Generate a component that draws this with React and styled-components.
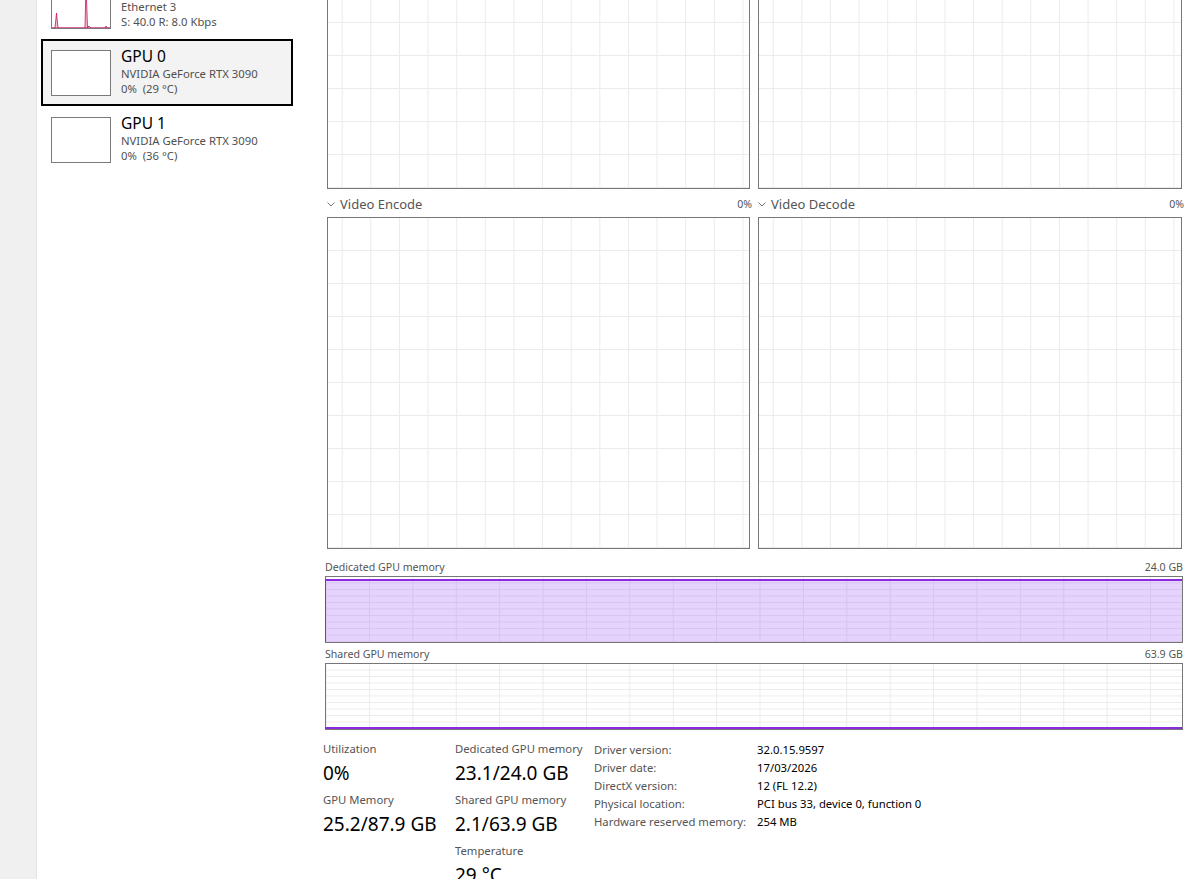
import React from 'react';
import styled, { createGlobalStyle } from 'styled-components';

const FONT = `"Segoe UI", "Noto Sans", "Open Sans", sans-serif`;
const SMALL = '11.3px';

const GlobalStyle = createGlobalStyle`
  html, body { margin: 0; padding: 0; background: #fff; overflow: hidden; }
  body { font-family: ${FONT}; color: #000; }
  * { box-sizing: border-box; }
`;

const Window = styled.div`
  display: flex;
  align-items: flex-start;
  width: 1201px;
  height: 879px;
  overflow: hidden;
  background: #fff;
`;

const Rail = styled.div`
  width: 37px;
  height: 879px;
  flex: none;
  background: #f0f0f0;
  border-right: 1px solid #e4e4e4;
`;

const Sidebar = styled.div`
  width: 288px;
  flex: none;
  display: flex;
  flex-direction: column;
  padding-left: 4px;
`;

const List = styled.div`
  display: flex;
  flex-direction: column;
  margin-top: -28px;
`;

const Item = styled.div`
  display: flex;
  align-items: flex-start;
  gap: 10px;
  width: 252px;
  height: 67px;
  flex: none;
  padding: 9px 0 0 8px;
  border: 2px solid ${p => (p.$selected ? '#000' : 'transparent')};
  background: ${p => (p.$selected ? '#f3f3f3' : 'transparent')};
`;

const Thumb = styled.div`
  width: 60px;
  height: 46px;
  flex: none;
  border: 1px solid #7a7a7a;
  background: #fff;
  overflow: hidden;
  display: flex;
`;

const ItemText = styled.div`
  display: flex;
  flex-direction: column;
  margin-top: -4px;
`;

const ItemTitle = styled.div`
  font-size: 15.5px;
  line-height: 20px;
  height: 20px;
  color: #000;
`;

const ItemSub = styled.div`
  font-size: ${SMALL};
  line-height: 15px;
  color: #505050;
  white-space: pre;
`;

const Main = styled.div`
  width: 858px;
  flex: none;
  display: flex;
  flex-direction: column;
  & > * { flex-shrink: 0; }
`;

const ChartGrid = styled.div`
  display: grid;
  grid-template-columns: 423px 424px;
  column-gap: 8px;
  padding-left: 2px;
  margin-top: -143px;
`;

const ChartCell = styled.div`
  display: flex;
  flex-direction: column;
`;

const ChartHeader = styled.div`
  height: 28px;
  padding-top: 2px;
  display: flex;
  align-items: center;
  justify-content: space-between;
  color: #555;
`;

const ChartName = styled.div`
  display: flex;
  align-items: center;
  gap: 5px;
  font-size: 13px;
`;

const Pct = styled.div`
  font-size: 10.5px;
  margin-right: -2px;
`;

const gridBg = (dx, dy, ox, oy) => `
  background-color: #fff;
  background-image:
    linear-gradient(to right, #ebebeb 1px, transparent 1px),
    linear-gradient(to bottom, #ebebeb 1px, transparent 1px);
  background-size: ${dx}px 100%, 100% ${dy}px;
  background-position: ${ox}px 0, 0 ${oy}px;
`;

const Chart = styled.div`
  height: 332px;
  flex: none;
  border: 1px solid #777;
  ${gridBg(28.64, 33, 13.7, 32)}
`;

const MemHeader = styled.div`
  height: 18px;
  margin-top: ${p => p.$gap}px;
  display: flex;
  align-items: center;
  justify-content: space-between;
  font-size: 10.6px;
  color: #555;
`;

const MemChart = styled.div`
  position: relative;
  height: 67px;
  border: 1px solid #777;
  ${gridBg(43.4, 6.5, 43, 5.5)}
`;

const MemFill = styled.div`
  position: absolute;
  left: -1px;
  right: 0;
  bottom: 0;
  background: rgba(150, 80, 250, 0.25);
  border-top: 2px solid #8a2be2;
  border-left: 1px solid #8a2be2;
`;

const Stats = styled.div`
  display: flex;
  margin-top: 11px;
  margin-left: -2px;
`;

const StatCol = styled.div`
  width: ${p => p.$w}px;
  flex: none;
  display: flex;
  flex-direction: column;
`;

const Stat = styled.div`
  display: flex;
  flex-direction: column;
  height: 51px;
  flex: none;
`;

const StatLabel = styled.div`
  font-size: ${SMALL};
  line-height: 16px;
  color: #555;
  white-space: nowrap;
`;

const StatValue = styled.div`
  font-size: 19px;
  line-height: 22px;
  margin-top: 5px;
  color: #000;
  white-space: nowrap;
`;

const Props = styled.div`
  display: grid;
  grid-template-columns: 163px auto;
  grid-auto-rows: 18px;
  margin-top: -1px;
  font-size: ${SMALL};
  align-items: center;
`;

const PropKey = styled.div`
  color: #555;
  white-space: nowrap;
`;

const PropVal = styled.div`
  color: #000;
  white-space: nowrap;
`;

const Chevron = () => (
  <svg width="8" height="5" viewBox="0 0 8 5">
    <polyline points="0.5,0.5 4,4 7.5,0.5" fill="none" stroke="#777" strokeWidth="1" />
  </svg>
);

const EthernetGraph = () => (
  <svg width="58" height="44" viewBox="0 0 58 44">
    <path
      d="M0,44 L3,44 L4.5,29 L6,44 L33,44 L34,0 L35.5,44 L37,42 L39,44 L53,44 L54,42 L55.5,44 L58,44 Z"
      fill="rgba(214, 60, 130, 0.3)"
      stroke="#c8105a"
      strokeWidth="0.8"
    />
  </svg>
);

const devices = [
  { id: 'eth', title: '', sub1: 'Ethernet 3', sub2: 'S: 40.0 R: 8.0 Kbps', graph: true },
  { id: 'gpu0', title: 'GPU 0', sub1: 'NVIDIA GeForce RTX 3090', sub2: '0%  (29 °C)', selected: true },
  { id: 'gpu1', title: 'GPU 1', sub1: 'NVIDIA GeForce RTX 3090', sub2: '0%  (36 °C)' },
];

const charts = [
  { id: 'a' },
  { id: 'b' },
  { id: 'enc', name: 'Video Encode', pct: '0%' },
  { id: 'dec', name: 'Video Decode', pct: '0%' },
];

const props = [
  ['Driver version:', '32.0.15.9597'],
  ['Driver date:', '17/03/2026'],
  ['DirectX version:', '12 (FL 12.2)'],
  ['Physical location:', 'PCI bus 33, device 0, function 0'],
  ['Hardware reserved memory:', '254 MB'],
];

export default function App() {
  const dedicated = (23.1 / 24.0) * 100;
  const shared = (2.1 / 63.9) * 100;
  return (
    <>
      <GlobalStyle />
      <Window>
        <Rail />
        <Sidebar>
          <List>
            {devices.map(d => (
              <Item key={d.id} $selected={d.selected}>
                <Thumb>{d.graph && <EthernetGraph />}</Thumb>
                <ItemText>
                  <ItemTitle>{d.title}</ItemTitle>
                  <ItemSub>{d.sub1}</ItemSub>
                  <ItemSub>{d.sub2}</ItemSub>
                </ItemText>
              </Item>
            ))}
          </List>
        </Sidebar>
        <Main>
          <ChartGrid>
            {charts.map(c => (
              <ChartCell key={c.id}>
                {c.name && (
                  <ChartHeader>
                    <ChartName>
                      <Chevron />
                      {c.name}
                    </ChartName>
                    <Pct>{c.pct}</Pct>
                  </ChartHeader>
                )}
                <Chart />
              </ChartCell>
            ))}
          </ChartGrid>
          <MemHeader $gap={9}>
            <span>Dedicated GPU memory</span>
            <span>24.0 GB</span>
          </MemHeader>
          <MemChart>
            <MemFill style={{ height: `${dedicated}%` }} />
          </MemChart>
          <MemHeader $gap={2}>
            <span>Shared GPU memory</span>
            <span>63.9 GB</span>
          </MemHeader>
          <MemChart>
            <MemFill style={{ height: `${shared}%` }} />
          </MemChart>
          <Stats>
            <StatCol $w={132}>
              <Stat>
                <StatLabel>Utilization</StatLabel>
                <StatValue>0%</StatValue>
              </Stat>
              <Stat>
                <StatLabel>GPU Memory</StatLabel>
                <StatValue>25.2/87.9 GB</StatValue>
              </Stat>
            </StatCol>
            <StatCol $w={139}>
              <Stat>
                <StatLabel>Dedicated GPU memory</StatLabel>
                <StatValue>23.1/24.0 GB</StatValue>
              </Stat>
              <Stat>
                <StatLabel>Shared GPU memory</StatLabel>
                <StatValue>2.1/63.9 GB</StatValue>
              </Stat>
              <Stat>
                <StatLabel>Temperature</StatLabel>
                <StatValue>29 °C</StatValue>
              </Stat>
            </StatCol>
            <Props>
              {props.map(([k, v]) => (
                <React.Fragment key={k}>
                  <PropKey>{k}</PropKey>
                  <PropVal>{v}</PropVal>
                </React.Fragment>
              ))}
            </Props>
          </Stats>
        </Main>
      </Window>
    </>
  );
}
